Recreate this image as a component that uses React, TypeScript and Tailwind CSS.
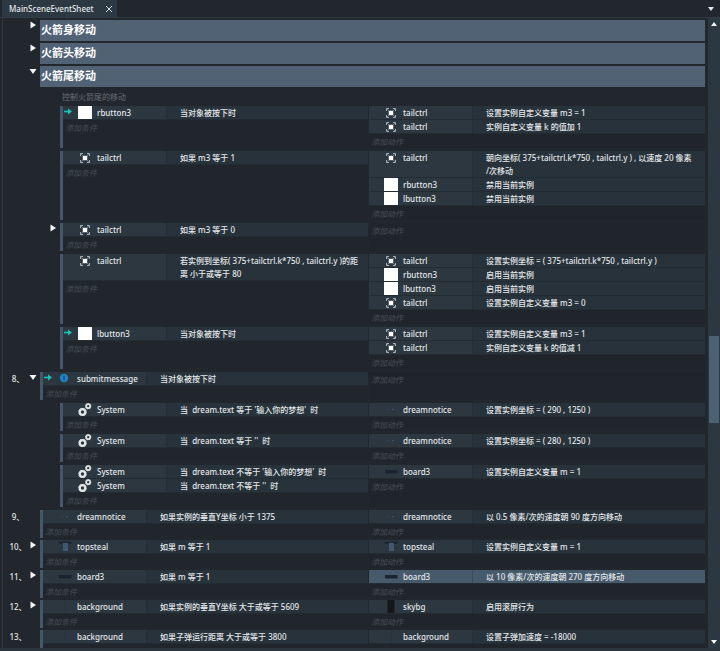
import React from 'react'

type IconName = 'target' | 'white' | 'gears' | 'message' | 'notice' | 'steal' | 'board' | 'ground' | 'sky'

interface Line {
  icon: IconName;
  name: string;
  text: string;
  trigger?: boolean;
  selected?: boolean;
}

interface EventData {
  no?: number;
  toggle?: 'open' | 'closed';
  locked?: boolean;
  conditions: Line[];
  actions: Line[];
}

const tail = (text: string): Line => ({ icon: 'target', name: 'tailctrl', text })
const button = (name: string, text: string, trigger = false): Line => ({ icon: 'white', name, text, trigger })

const tailEvents: EventData[] = [
  {
    conditions: [button('rbutton3', '当对象被按下时', true)],
    actions: [tail('设置实例自定义变量 m3 = 1'), tail('实例自定义变量 k 的值加 1')],
  },
  {
    conditions: [tail('如果 m3 等于 1')],
    actions: [
      tail('朝向坐标( 375+tailctrl.k*750 , tailctrl.y ) , 以速度 20 像素\n/次移动'),
      button('rbutton3', '禁用当前实例'),
      button('lbutton3', '禁用当前实例'),
    ],
  },
  { toggle: 'closed', conditions: [tail('如果 m3 等于 0')], actions: [] },
  {
    conditions: [tail('若实例到坐标( 375+tailctrl.k*750 , tailctrl.y )的距\n离 小于或等于 80')],
    actions: [
      tail('设置实例坐标 = ( 375+tailctrl.k*750 , tailctrl.y )'),
      button('rbutton3', '启用当前实例'),
      button('lbutton3', '启用当前实例'),
      tail('设置实例自定义变量 m3 = 0'),
    ],
  },
  {
    conditions: [button('lbutton3', '当对象被按下时', true)],
    actions: [tail('设置实例自定义变量 m3 = 1'), tail('实例自定义变量 k 的值减 1')],
  },
]

const submitEvent: EventData = {
  no: 8,
  toggle: 'open',
  conditions: [{ icon: 'message', name: 'submitmessage', text: '当对象被按下时', trigger: true }],
  actions: [],
}

const submitEvents: EventData[] = [
  {
    conditions: [{ icon: 'gears', name: 'System', text: "当  dream.text 等于 '输入你的梦想'  时" }],
    actions: [{ icon: 'notice', name: 'dreamnotice', text: '设置实例坐标 = ( 290 , 1250 )' }],
  },
  {
    conditions: [{ icon: 'gears', name: 'System', text: "当  dream.text 等于 ''  时" }],
    actions: [{ icon: 'notice', name: 'dreamnotice', text: '设置实例坐标 = ( 280 , 1250 )' }],
  },
  {
    conditions: [
      { icon: 'gears', name: 'System', text: "当  dream.text 不等于 '输入你的梦想'  时" },
      { icon: 'gears', name: 'System', text: "当  dream.text 不等于 ''  时" },
    ],
    actions: [{ icon: 'board', name: 'board3', text: '设置实例自定义变量 m = 1' }],
  },
]

const events: EventData[] = [
  {
    no: 9,
    conditions: [{ icon: 'notice', name: 'dreamnotice', text: '如果实例的垂直Y坐标 小于 1375' }],
    actions: [{ icon: 'notice', name: 'dreamnotice', text: '以 0.5 像素/次的速度朝 90 度方向移动' }],
  },
  {
    no: 10,
    toggle: 'closed',
    conditions: [{ icon: 'steal', name: 'topsteal', text: '如果 m 等于 1' }],
    actions: [{ icon: 'steal', name: 'topsteal', text: '设置实例自定义变量 m = 1' }],
  },
  {
    no: 11,
    toggle: 'closed',
    conditions: [{ icon: 'board', name: 'board3', text: '如果 m 等于 1' }],
    actions: [{ icon: 'board', name: 'board3', text: '以 10 像素/次的速度朝 270 度方向移动', selected: true }],
  },
  {
    no: 12,
    toggle: 'closed',
    conditions: [{ icon: 'ground', name: 'background', text: '如果实例的垂直Y坐标 大于或等于 5609' }],
    actions: [{ icon: 'sky', name: 'skybg', text: '启用滚屏行为' }],
  },
  {
    no: 13,
    locked: true,
    conditions: [{ icon: 'ground', name: 'background', text: '如果子弹运行距离 大于或等于 3800' }],
    actions: [{ icon: 'ground', name: 'background', text: '设置子弹加速度 = -18000' }],
  },
]

const shapes: Record<IconName, React.ReactNode> = {
  white: <rect x="1" width="14" height="13" fill="#fff" />,
  target: (
    <>
      <path d="M3.5 5V2.5H6M10 2.5h2.5V5M12.5 9v2.5H10M6 11.5H3.5V9" fill="none" stroke="#a7afb5" strokeWidth="1" />
      <path d="M4 3l2 2M12 3l-2 2M12 11l-2-2M4 11l2-2" stroke="#6c757e" strokeWidth="1" />
      <rect x="5.8" y="4.8" width="4.4" height="4.4" fill="#fff" />
    </>
  ),
  gears: (
    <>
      <circle cx="5.5" cy="9" r="2.8" fill="none" stroke="#e6e9eb" strokeWidth="2.2" />
      <circle cx="5.5" cy="9" r="3.7" fill="none" stroke="#d5d9dc" strokeWidth="1" strokeDasharray="1.6 1.3" />
      <circle cx="11.2" cy="3.2" r="2" fill="none" stroke="#dfe3e6" strokeWidth="1.7" />
      <circle cx="11.2" cy="3.2" r="2.7" fill="none" stroke="#d5d9dc" strokeWidth="0.9" strokeDasharray="1.1 1" />
    </>
  ),
  message: (
    <>
      <circle cx="7" cy="6" r="4.2" fill="#1b83c6" />
      <path d="M6.2 3.8h1.8v4.4H6.2z" fill="#1a5a94" />
    </>
  ),
  notice: (
    <>
      <path d="M4 6.5h2" stroke="#354554" />
      <path d="M9 6.5h2" stroke="#2d5a7e" />
    </>
  ),
  steal: (
    <>
      <rect x="1.5" y="1.5" width="13" height="2.5" fill="#1e262f" />
      <rect x="6" y="3" width="5" height="8" fill="#40586f" />
    </>
  ),
  board: <rect x="2" y="5" width="12.5" height="3.5" fill="#1b242e" />,
  ground: <path d="M8.5 0v13" stroke="#28333c" />,
  sky: <rect x="4.5" width="7" height="13" fill="#15181b" />,
}

const Icon = ({ name }: { name: IconName }) => (
  <svg viewBox="0 0 16 13" className="h-[13px] w-4 shrink-0" aria-hidden="true">
    {shapes[name]}
  </svg>
)

const Toggle = ({ state }: { state: 'open' | 'closed' }) => (
  <button type="button" aria-label="toggle" aria-expanded={state === 'open'} className="block h-2.5 w-2.5 shrink-0">
    <svg viewBox="0 0 10 10" className="h-2.5 w-2.5">
      <path d={state === 'open' ? 'M1.5 3h7L5 8z' : 'M2.5 1.5v7L8 5z'} fill="#f4f5f6" />
    </svg>
  </button>
)

const Row = ({ line }: { line: Line }) => (
  <li className={`flex border-b border-[#232b33] ${line.selected ? 'bg-[#475a6c]' : 'bg-[#28323a]'}`}>
    <div className={`flex w-26 shrink-0 border-r ${line.selected ? 'border-[#38495a]' : 'border-[#252e36] bg-[#2c3740]'}`}>
      <div className="w-3.5 shrink-0">
        {line.trigger && (
          <svg viewBox="0 0 14 13" className="h-[13px] w-3.5" aria-hidden="true">
            <path d="M1 5.5h5" stroke="#14c4bd" strokeWidth="1.6" />
            <path d="M5 2.6L9 5.5 5 8.4z" fill="#14c4bd" />
          </svg>
        )}
      </div>
      <Icon name={line.icon} />
      <span className="pl-1">{line.name}</span>
    </div>
    <p className="min-w-0 whitespace-pre pl-[13px]">{line.text}</p>
  </li>
)

const AddButton = ({ label }: { label: string }) => (
  <button type="button" className="block h-3.5 pl-0.5 text-left italic text-[#41474d]">{label}</button>
)

const EventBlock = ({ data, nested = false }: { data: EventData; nested?: boolean }) => (
  <article className="grid grid-cols-[369fr_336fr]">
    <div className="flex min-w-0 pr-px">
      <div className={`flex shrink-0 justify-end pr-0.5 ${nested ? 'w-15' : 'w-10'}`}>
        {data.no && <span className="w-5 shrink-0 text-center">{data.no}、</span>}
        <div className="w-2.5 shrink-0">{data.toggle && <Toggle state={data.toggle} />}</div>
      </div>
      <div className="min-w-0 flex-1 border-l-3 border-[#465767] bg-[#20262c]">
        <ul>
          {data.conditions.map((line, i) => <Row key={i} line={line} />)}
        </ul>
        {data.locked ? <div className="h-3.5" /> : <AddButton label="添加条件" />}
      </div>
    </div>
    <div className="min-w-0 bg-[#20252b]">
      <ul>
        {data.actions.map((line, i) => <Row key={i} line={line} />)}
      </ul>
      {!data.locked && <AddButton label="添加动作" />}
    </div>
  </article>
)

const Group = ({ title, state }: { title: string; state: 'open' | 'closed' }) => (
  <div className="flex">
    <div className="flex w-10 shrink-0 justify-end pr-0.5">
      <Toggle state={state} />
    </div>
    <h2 className="h-[21px] flex-1 bg-[#516275] pl-px text-[11px] leading-5 font-bold text-white">{title}</h2>
  </div>
)

const App = () => {
  return (
    <main
      lang="zh-CN"
      className="flex h-screen flex-col overflow-hidden bg-[#22272e] font-['Noto_Sans','Noto_Sans_CJK_SC',sans-serif] text-[8px] leading-[13px] font-medium text-[#e4e8eb]"
    >
      <header className="flex h-[18px] shrink-0 items-center justify-between border-b border-[#2f3c46] pl-0.5">
        <div className="flex h-full w-[115px] items-center justify-between bg-[#2c3943] pr-1 pl-[7px]">
          <span>MainSceneEventSheet</span>
          <button type="button" aria-label="close">
            <svg viewBox="0 0 8 8" className="h-2 w-2">
              <path d="M1 1l6 6M7 1L1 7" stroke="#d5dade" strokeWidth="1" />
            </svg>
          </button>
        </div>
        <button type="button" aria-label="tabs" className="pr-1.5">
          <svg viewBox="0 0 6 4" className="h-1 w-1.5">
            <path d="M0 0h6L3 4z" fill="#e4e8eb" />
          </svg>
        </button>
      </header>

      <div className="flex min-h-0 flex-1 border-b-3 border-[#2b353e]">
        <div className="relative min-w-0 flex-1 overflow-hidden pt-0.5">
          <div className="absolute inset-y-0 left-0.5 w-px bg-[#2d3841]" />
          <section className="flex flex-col gap-0.5">
            <Group title="火箭身移动" state="closed" />
            <Group title="火箭头移动" state="closed" />
            <Group title="火箭尾移动" state="open" />
          </section>
          <p className="h-[19px] pt-[3px] pl-[62px] text-[#5a6066]">控制火箭尾的移动</p>
          <section className="flex flex-col gap-[3px] pb-[3px]">
            {tailEvents.map((data, i) => <EventBlock key={i} data={data} nested />)}
          </section>
          <EventBlock data={submitEvent} />
          <section className="flex flex-col gap-[3px] py-[3px]">
            {submitEvents.map((data, i) => <EventBlock key={i} data={data} nested />)}
          </section>
          <section className="flex flex-col gap-0.5">
            {events.map((data) => <EventBlock key={data.no} data={data} />)}
          </section>
        </div>

        <aside className="ml-[3px] flex w-3 shrink-0 flex-col items-center justify-between bg-[#2b3841] py-1">
          <svg viewBox="0 0 6 4" className="h-1 w-1.5" aria-hidden="true">
            <path d="M0 4h6L3 0z" fill="#f4f5f6" />
          </svg>
          <div className="flex w-full flex-1 flex-col px-px">
            <div className="grow-[310]" />
            <div className="grow-[87] bg-[#4b6272]" />
            <div className="grow-[217]" />
          </div>
          <svg viewBox="0 0 6 4" className="h-1 w-1.5" aria-hidden="true">
            <path d="M0 0h6L3 4z" fill="#f4f5f6" />
          </svg>
        </aside>
      </div>
    </main>
  )
}

export default App
